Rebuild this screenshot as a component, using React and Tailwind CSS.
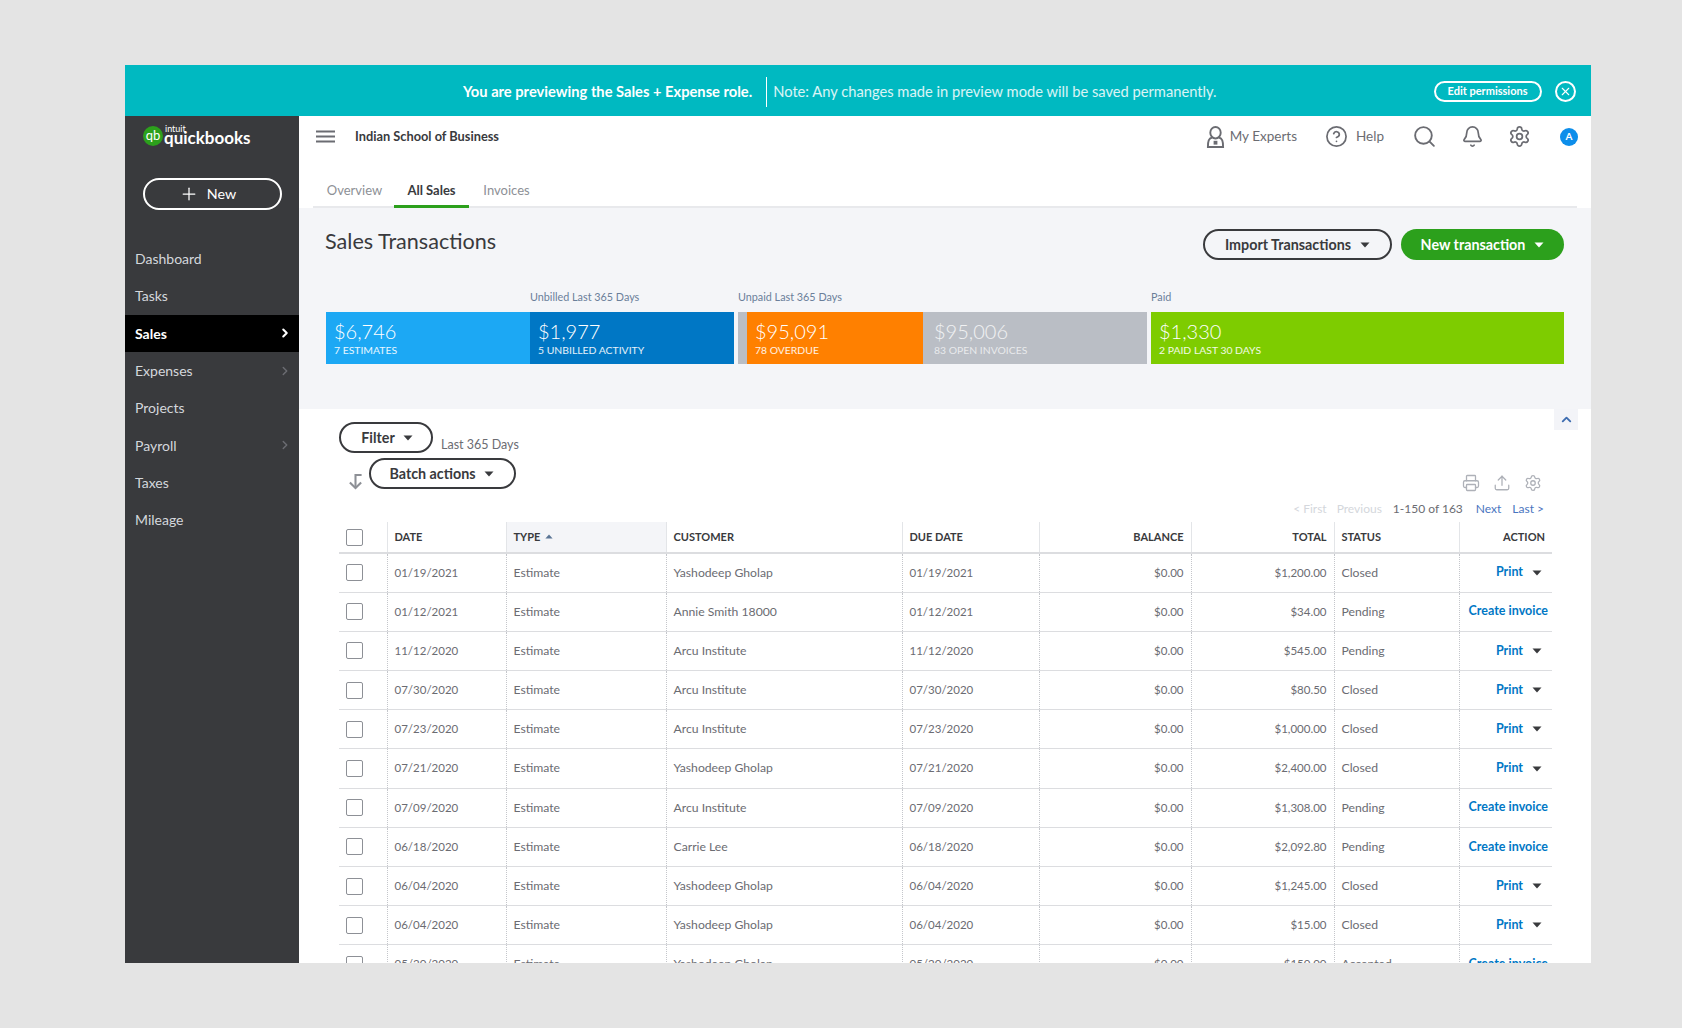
import { Search, Bell, Settings, Printer, Upload, CircleHelp, X, Plus, ChevronRight, ChevronUp } from "lucide-react";

const navItems = [
  { label: "Dashboard" },
  { label: "Tasks" },
  { label: "Sales", active: true, arrow: true },
  { label: "Expenses", arrow: true },
  { label: "Projects" },
  { label: "Payroll", arrow: true },
  { label: "Taxes" },
  { label: "Mileage" },
];

const rows = [
  ["01/19/2021", "Yashodeep Gholap", "$1,200.00", "Closed", "print"],
  ["01/12/2021", "Annie Smith 18000", "$34.00", "Pending", "invoice"],
  ["11/12/2020", "Arcu Institute", "$545.00", "Pending", "print"],
  ["07/30/2020", "Arcu Institute", "$80.50", "Closed", "print"],
  ["07/23/2020", "Arcu Institute", "$1,000.00", "Closed", "print"],
  ["07/21/2020", "Yashodeep Gholap", "$2,400.00", "Closed", "print"],
  ["07/09/2020", "Arcu Institute", "$1,308.00", "Pending", "invoice"],
  ["06/18/2020", "Carrie Lee", "$2,092.80", "Pending", "invoice"],
  ["06/04/2020", "Yashodeep Gholap", "$1,245.00", "Closed", "print"],
  ["06/04/2020", "Yashodeep Gholap", "$15.00", "Closed", "print"],
  ["05/20/2020", "Yashodeep Gholap", "$150.00", "Accepted", "invoice"],
];

function Caret({ className }) {
  return (
    <svg viewBox="0 0 10 6" className={className} fill="currentColor">
      <path d="M0.5 0.5h9L5 5.5z" />
    </svg>
  );
}

function Pill({ children, className }) {
  return (
    <button className={`flex h-[31px] items-center justify-center rounded-full border-2 border-[#393a3d] bg-transparent text-[14.3px] font-bold text-[#393a3d] ${className}`}>
      {children}
    </button>
  );
}

function Tile({ amount, label, className, muted }) {
  return (
    <div className={`h-[52px] pl-2 pt-[8px] text-white ${className}`}>
      <p className={`text-[20px] font-light leading-[23px] ${muted ? "text-white/80" : ""}`}>{amount}</p>
      <p className={`text-[10.4px] leading-[14px] uppercase ${muted ? "text-white/70" : "text-white/90"}`}>{label}</p>
    </div>
  );
}

function Num({ children }) {
  return <span className="text-[11.5px]">{children}</span>;
}

export default function App() {
  return (
    <div className="h-[1028px] w-[1682px] overflow-hidden bg-[#e4e4e4] pl-[125px] pt-[65px] font-['Lato',sans-serif]">
      <div className="flex h-[898px] w-[1466px] flex-col overflow-hidden">
        {/* Preview banner */}
        <div className="flex h-[51px] shrink-0 items-center bg-[#00b9c1] pl-[338px] pt-[2px] text-white">
          <span className="text-[14.7px] font-bold">You are previewing the Sales + Expense role.</span>
          <span className="ml-[14px] mr-[6px] h-[30px] w-px bg-white" />
          <span className="text-[14.7px] text-white/85">Note: Any changes made in preview mode will be saved permanently.</span>
          <button className="ml-[217px] flex h-[21px] w-[108px] items-center justify-center rounded-full border-2 border-white text-[11px] font-bold">
            Edit permissions
          </button>
          <span className="ml-[13px] flex h-[21px] w-[21px] items-center justify-center rounded-full border-2 border-white">
            <X size={13} strokeWidth={2} />
          </span>
        </div>

        <div className="flex min-h-0 flex-1">
          {/* Sidebar */}
          <aside className="w-[174px] shrink-0 bg-[#393a3d] text-[#d4d7dc]">
            <div className="flex h-[62px] items-start pl-[18px] pt-[10px]">
              <span className="flex h-[20px] w-[20px] items-center justify-center rounded-full bg-[#2ca01c] pb-[2px] text-[13px] leading-none text-white">qb</span>
              <div className="ml-[1px] -mt-[1px] text-white">
                <p className="ml-px h-[9px] text-[9px] leading-[7px]">intuit</p>
                <p className="h-[7px] text-[17px] font-bold leading-[7px]">quickbooks</p>
              </div>
            </div>
            <button className="ml-[18px] flex h-[32px] w-[139px] items-center justify-center gap-[8px] rounded-full border-2 border-white pr-[10px] text-[14.3px] text-white">
              <Plus size={20} strokeWidth={1.5} />
              New
            </button>
            <nav className="mt-[30px]">
              {navItems.map((item) => (
                <div
                  key={item.label}
                  className={`flex h-[37.3px] items-center justify-between pl-[10px] pr-[7px] text-[14px] ${item.active ? "bg-black font-bold text-white" : ""}`}
                >
                  {item.label}
                  {item.arrow && (
                    <ChevronRight size={14} strokeWidth={item.active ? 3.5 : 2.5} className={item.active ? "text-white" : "text-[#6b6c72]"} />
                  )}
                </div>
              ))}
            </nav>
          </aside>

          {/* Main column */}
          <main className="flex min-w-0 flex-1 flex-col bg-white">
            <header className="flex h-[41px] shrink-0 items-center pl-[17px] pr-[13px] text-[#6b6c72]">
              <svg viewBox="0 0 19 13" className="h-[13px] w-[19px]" stroke="#6b6c72" strokeWidth="2">
                <path d="M0 1.500h19M0 6.500h19M0 11.500h19" />
              </svg>
              <span className="ml-[20px] text-[12.8px] font-bold text-[#393a3d]">Indian School of Business</span>
              <div className="ml-auto flex items-center text-[13.5px]">
                <svg viewBox="0 0 20 24" className="h-[24px] w-[19px]" fill="none" stroke="#6b6c72" strokeWidth="2">
                  <ellipse cx="10" cy="7.500" rx="5.500" ry="6" />
                  <path d="M6.500 12.500C2.800 13.500 2 16 2 22.500h16c0-6.500-.8-9-4.500-10" />
                  <path d="M8 16h4v4H8z" fill="#6b6c72" stroke="none" />
                </svg>
                <span className="ml-[5px]">My Experts</span>
                <CircleHelp size={23} strokeWidth={1.8} className="ml-[28px]" />
                <span className="ml-[8px]">Help</span>
                <Search size={25} strokeWidth={1.8} className="ml-[28px]" />
                <Bell size={23} strokeWidth={1.8} className="ml-[24px]" />
                <Settings size={23} strokeWidth={1.8} className="ml-[24px]" />
                <span className="ml-[29px] flex h-[18px] w-[18px] items-center justify-center rounded-full bg-[#0d8eea] text-[10px] font-bold text-white">A</span>
              </div>
            </header>

            <div className="mx-[14px] flex h-[51px] shrink-0 items-end border-b-2 border-[#e8e9ec] text-[13px] text-[#8d9096]">
              <span className="-mb-[2px] flex h-[27px] w-[81px] items-start justify-center pl-[2px]">Overview</span>
              <span className="-mb-[2px] flex h-[27px] w-[75px] items-start justify-center border-b-[3px] border-[#2ca01c] font-bold text-[#393a3d]">All Sales</span>
              <span className="-mb-[2px] flex h-[27px] w-[75px] items-start justify-center">Invoices</span>
            </div>

            {/* Summary band */}
            <section className="h-[201px] shrink-0 bg-[#f4f5f8] pl-[27px] pr-[27px]">
              <div className="flex h-[68px] items-start justify-between">
                <h1 className="-ml-px mt-[18px] text-[21.6px] leading-[30px] text-[#393a3d]">Sales Transactions</h1>
                <div className="mt-[21px] flex gap-[9px]">
                  <Pill className="w-[189px] gap-[9px]">
                    Import Transactions
                    <Caret className="h-[6px] w-[10px]" />
                  </Pill>
                  <button className="flex h-[31px] w-[163px] items-center justify-center gap-[9px] rounded-full bg-[#2ca01c] text-[14.3px] font-bold text-white">
                    New transaction
                    <Caret className="h-[6px] w-[10px]" />
                  </button>
                </div>
              </div>
              <div className="flex h-[36px] items-end pb-[9px] text-[10.8px] leading-[13px] text-[#6b7f9a]">
                <span className="ml-[204px] w-[208px]">Unbilled Last 365 Days</span>
                <span className="w-[413px]">Unpaid Last 365 Days</span>
                <span>Paid</span>
              </div>
              <div className="flex">
                <Tile amount="$6,746" label="7 Estimates" className="w-[204px] bg-[#1ca8f4]" />
                <Tile amount="$1,977" label="5 Unbilled Activity" className="w-[204px] bg-[#0077c5]" />
                <div className="ml-1 w-[9px] bg-[#babec5]" />
                <Tile amount="$95,091" label="78 Overdue" className="w-[176px] bg-[#ff8000]" />
                <Tile amount="$95,006" label="83 Open Invoices" className="w-[224px] pl-[11px] bg-[#babec5]" muted />
                <Tile amount="$1,330" label="2 Paid Last 30 Days" className="ml-1 w-[413px] bg-[#7ecc00]" />
              </div>
            </section>

            {/* Table area */}
            <section className="relative min-h-0 flex-1 overflow-hidden pl-[40px] pr-[39px]">
              <button className="absolute right-[13px] top-0 flex h-[21px] w-[24px] items-center justify-center bg-[#f3f4f8] text-[#3e6db0]">
                <ChevronUp size={15} strokeWidth={3} />
              </button>
              <div className="flex items-start pt-[13px]">
                <Pill className="w-[94px] gap-[8px] pl-[2px]">
                  Filter
                  <Caret className="h-[6px] w-[10px]" />
                </Pill>
                <span className="ml-[8px] mt-[14px] text-[12.5px] leading-[18px] text-[#6b6c72]">Last 365 Days</span>
              </div>
              <div className="relative h-[68px]">
                <div className="flex items-start pt-[4px]">
                  <svg viewBox="0 0 16 18" className="ml-[9px] mt-[15px] h-[17px] w-[15px]" fill="none" stroke="#8d9096" strokeWidth="2.2">
                    <path d="M14.500 2H8v14" />
                    <path d="M2 10l6 6 6-6" />
                  </svg>
                  <Pill className="ml-[6px] w-[147px] gap-[8px] pr-[2px]">
                    Batch actions
                    <Caret className="h-[6px] w-[10px]" />
                  </Pill>
                </div>
                <div className="absolute right-[10px] top-[20px] flex gap-[13px] text-[#aeb1b8]">
                  <Printer size={18} strokeWidth={1.7} />
                  <Upload size={18} strokeWidth={1.7} />
                  <Settings size={18} strokeWidth={1.7} />
                </div>
                <div className="absolute right-[8px] top-[47px] flex items-center gap-[11px] text-[12px] leading-[16px]">
                  <span className="-mr-px text-[#d4d7dc]">&lt; First</span>
                  <span className="text-[#d4d7dc]">Previous</span>
                  <span className="text-[#6b6c72]">1-150 of 163</span>
                  <span className="ml-[2px] text-[#4a75c0]">Next</span>
                  <span className="text-[#4a75c0]">Last &gt;</span>
                </div>
              </div>

              <table className="w-[1213px] table-fixed border-collapse text-[12.2px] text-[#6b6c72]">
                <colgroup>
                  <col className="w-[48px]" />
                  <col className="w-[119px]" />
                  <col className="w-[160px]" />
                  <col className="w-[236px]" />
                  <col className="w-[137px]" />
                  <col className="w-[152px]" />
                  <col className="w-[143px]" />
                  <col className="w-[125px]" />
                  <col className="w-[93px]" />
                </colgroup>
                <thead>
                  <tr className="h-[31px] border-b-2 border-[#dcdde0] text-[11px] font-bold text-[#393a3d]">
                    <th className="px-0 text-left">
                      <span className="ml-[7px] block h-[17px] w-[17px] rounded-[2px] border border-[#8d9096] bg-white" />
                    </th>
                    <th className="border-l border-[#e3e5e8] pl-[7px] text-left">DATE</th>
                    <th className="border-l border-[#e3e5e8] bg-[#f4f5f8] pl-[7px] text-left">
                      TYPE <span className="ml-[2px] inline-block align-[2px] text-[#5a7595]"><Caret className="h-[5px] w-[8px] rotate-180" /></span>
                    </th>
                    <th className="border-l border-[#e3e5e8] pl-[7px] text-left">CUSTOMER</th>
                    <th className="border-l border-[#e3e5e8] pl-[7px] text-left">DUE DATE</th>
                    <th className="border-l border-[#e3e5e8] pr-[7px] text-right">BALANCE</th>
                    <th className="border-l border-[#e3e5e8] pr-[7px] text-right">TOTAL</th>
                    <th className="border-l border-[#e3e5e8] pl-[7px] text-left">STATUS</th>
                    <th className="border-l border-[#e3e5e8] pr-[7px] text-right">ACTION</th>
                  </tr>
                </thead>
                <tbody>
                  {rows.map((row, i) => (
                    <tr key={i} className="h-[39.2px] border-b border-[#dcdde0]">
                      <td>
                        <span className="ml-[7px] block h-[17px] w-[17px] rounded-[2px] border border-[#8d9096] bg-white" />
                      </td>
                      <td className="border-l border-dotted border-[#c4c6cb] pl-[7px]"><Num>{row[0]}</Num></td>
                      <td className="border-l border-dotted border-[#c4c6cb] pl-[7px]">Estimate</td>
                      <td className="border-l border-dotted border-[#c4c6cb] pl-[7px]">{row[1]}</td>
                      <td className="border-l border-dotted border-[#c4c6cb] pl-[7px]"><Num>{row[0]}</Num></td>
                      <td className="border-l border-dotted border-[#c4c6cb] pr-[7px] text-right"><Num>$0.00</Num></td>
                      <td className="border-l border-dotted border-[#c4c6cb] pr-[7px] text-right"><Num>{row[2]}</Num></td>
                      <td className="border-l border-dotted border-[#c4c6cb] pl-[7px]">{row[3]}</td>
                      <td className="border-l border-dotted border-[#c4c6cb] pr-[4px] text-right text-[12.5px] font-bold text-[#0077c5]">
                        {row[4] === "print" ? (
                          <span className="flex items-center justify-end pr-[6px]">
                            Print
                            <Caret className="ml-[9px] h-[6px] w-[10px] text-[#393a3d]" />
                          </span>
                        ) : (
                          "Create invoice"
                        )}
                      </td>
                    </tr>
                  ))}
                </tbody>
              </table>
            </section>
          </main>
        </div>
      </div>
    </div>
  );
}
